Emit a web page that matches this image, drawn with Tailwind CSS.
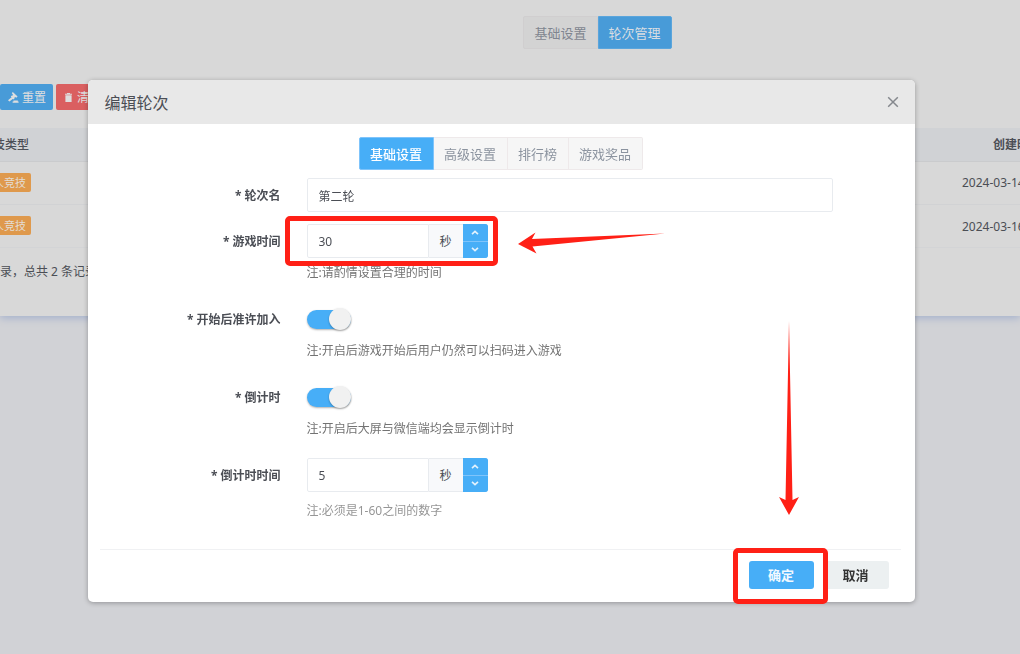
<!DOCTYPE html>
<html lang="zh-CN">
<head>
<meta charset="utf-8">
<meta name="viewport" content="width=device-width, initial-scale=1">
<title>编辑轮次</title>
<script src="https://cdn.jsdelivr.net/npm/@tailwindcss/browser@4"></script>
</head>
<body class="min-h-screen overflow-hidden bg-[#d1d2d6] font-['Noto_Sans','Noto_Sans_CJK_SC',sans-serif] text-xs text-[#4b4e55]">

<!-- Round list behind the dialog -->
<main class="overflow-hidden pb-4">
  <section class="bg-[#d8d8d8] pt-4 pb-[35px] shadow-[0_2px_8px_#a3b0cc]">
    <nav class="flex justify-center pl-[175px] text-[13px]">
      <button type="button" class="h-[33px] rounded-l-xs border border-[#d0cecf] bg-[#d3d3d3] px-[10px] pt-0.5 text-[#7f858f]">基础设置</button>
      <button type="button" class="h-[33px] rounded-r-xs border border-[#5aa5dc] bg-[#489bd8] px-[10px] pt-0.5 text-[#d8dde2]">轮次管理</button>
    </nav>
    <div class="mt-[35px] flex gap-[3px] text-[#dedede]">
      <button type="button" class="flex h-[26px] items-center gap-[3px] rounded-xs bg-[#489bd8] pr-[7px] pl-2">
        <svg class="size-[11px]" viewBox="0 0 11 11" fill="currentColor" aria-hidden="true"><path d="M4.800 0 9.600 4.600 8.300 5.700 7.200 5.100 6.200 6 6.500 6.800 5.600 7.400 2.800 4.600 3.300 3.700 4.100 3.800 5 2.900 4.500 2 3.800 1.200ZM3.600 5.300 5 6.700 1.400 9.400 0 8.200ZM5.500 8.400h4.300v1h.8v1.300H4.600V9.400h.9Z"/></svg>
        <span class="pt-px">重置</span></button>
      <button type="button" class="flex h-[26px] items-center gap-[5px] rounded-xs bg-[#da5f60] px-[9px]">
        <svg class="h-[9px] w-[7px]" viewBox="0 0 7 9" fill="currentColor" aria-hidden="true"><path d="M2 0h3v.7h2v1H0v-1h2ZM.4 2.2h6.2V9H.4Z"/></svg>
        <span class="pt-px">清空</span></button>
    </div>
    <div class="mt-[18px] -mr-[72px] -ml-10">
      <table class="w-full table-fixed border-collapse text-center whitespace-nowrap">
        <colgroup><col class="w-[90px]"><col><col class="w-[150px]"></colgroup>
        <thead>
          <tr class="h-[33px] border-b border-[#cacbcd] bg-[#d0d2d5]"><th class="pt-0.5 font-medium">竞技类型</th><th></th><th class="pt-0.5 font-bold">创建时间</th></tr>
        </thead>
        <tbody>
          <tr class="h-[43px] border-b border-[#d1d2d4]"><td class="pr-0.5"><span class="inline-block rounded-xs bg-[#df994c] px-[5px] text-[11px] leading-[19px] text-[#e3ddd5]">多人竞技</span></td><td></td><td class="pl-5 text-left">2024-03-14 10:20</td></tr>
          <tr class="h-[43px] border-b border-[#d3d4d6]"><td class="pr-0.5"><span class="inline-block rounded-xs bg-[#df994c] px-[5px] text-[11px] leading-[19px] text-[#e3ddd5]">多人竞技</span></td><td></td><td class="pt-0.5 pl-5 text-left">2024-03-16 10:20</td></tr>
        </tbody>
      </table>
    </div>
    <p class="mt-[15px] leading-[18px]">录，总共 2 条记录</p>
  </section>
</main>

<!-- Edit dialog -->
<div class="fixed inset-0 flex items-start justify-center pt-20 pr-[18px]">
  <section role="dialog" aria-labelledby="dialog-title" class="relative w-full max-w-[827px] rounded-[5px] bg-white shadow-[0_1px_5px_rgba(0,0,0,.3)]">
    <header class="flex h-11 items-center justify-between rounded-t-[5px] bg-[#e8e8e8] pr-4 pl-[17px]">
      <h1 id="dialog-title" class="pt-0.5 text-base">编辑轮次</h1>
      <button type="button" aria-label="关闭">
        <svg class="size-3" viewBox="0 0 12 12" fill="none" stroke="#85888d" stroke-width="1.5" aria-hidden="true"><path d="m1.2 1.2 9.6 9.6M10.8 1.2l-9.6 9.6"/></svg>
      </button>
    </header>

    <nav class="flex justify-center pt-[13px] text-[13px] text-[#8b939f]">
      <button type="button" class="h-[33px] rounded-l-xs border border-[#7fc4fb] bg-[#47aef7] pt-0.5 pr-[11px] pl-[10px] font-medium text-white">基础设置</button>
      <button type="button" class="h-[33px] border-y border-r border-[#eee9ea] bg-[#f6f6f6] pt-0.5 pr-[11px] pl-[10px]">高级设置</button>
      <button type="button" class="h-[33px] border-y border-r border-[#eee9ea] bg-[#f6f6f6] pt-0.5 pr-[11px] pl-[10px]">排行榜</button>
      <button type="button" class="h-[33px] rounded-r-xs border-y border-r border-[#eee9ea] bg-[#f6f6f6] pt-0.5 pr-[11px] pl-[10px]">游戏奖品</button>
    </nav>

    <form class="mt-2 text-[#4b4e55]">
      <div class="grid grid-cols-[193px_1fr] items-center gap-x-[26px] pr-[82px]">
        <label for="round-name" class="pt-px text-right font-bold">* 轮次名</label>
        <input id="round-name" type="text" value="第二轮" class="h-[34px] w-full rounded-xs border border-[#e8ebef] px-[11px] pt-0.5 outline-none">
      </div>

      <div class="mt-3 grid grid-cols-[193px_1fr] items-center gap-x-[26px]">
        <label for="game-time" class="pt-px text-right font-bold">* 游戏时间</label>
        <div class="relative flex h-[34px] w-[181px]">
          <input id="game-time" type="text" inputmode="numeric" value="30" class="min-w-0 flex-1 rounded-l-xs border border-[#e8ebef] px-[11px] pt-0.5 outline-none">
          <span class="flex w-[34px] items-center justify-center border-y border-[#e8ebef] bg-[#f8f9fb] pt-0.5">秒</span>
          <span class="flex w-[25px] flex-col gap-px overflow-hidden rounded-r-[3px] bg-[#7fc4fb]">
            <button type="button" aria-label="增加游戏时间" class="flex flex-1 items-center justify-center bg-[#47aef7]"><svg class="h-[5px] w-2" viewBox="0 0 8 5" fill="none" stroke="#e3f2fd" stroke-width="1.6" aria-hidden="true"><path d="M1 4.2 4 1.3l3 2.9"/></svg></button>
            <button type="button" aria-label="减少游戏时间" class="flex flex-1 items-center justify-center bg-[#47aef7]"><svg class="h-[5px] w-2" viewBox="0 0 8 5" fill="none" stroke="#e3f2fd" stroke-width="1.6" aria-hidden="true"><path d="m1 .8 3 2.9L7 .8"/></svg></button>
          </span>
          <span class="pointer-events-none absolute -top-2 -right-[10px] -bottom-2 -left-[22px] rounded-[5px] border-5 border-[#ff2016]"></span>
          <svg class="pointer-events-none absolute top-2 left-[211px] h-[22px] w-[147px]" viewBox="0 0 147 22" fill="#ff2016" aria-hidden="true"><path d="M0 12 17.500 0.500 14 7 147 1.500 14.500 14.500 18.500 21.500Z"/></svg>
        </div>
        <p class="col-start-2 mt-[6px] leading-[18px] text-[#737373]">注:请酌情设置合理的时间</p>
      </div>

      <div class="mt-[26px] grid grid-cols-[193px_1fr] items-center gap-x-[26px]">
        <label for="late-join" class="pt-px text-right leading-[21px] font-bold">* 开始后准许加入</label>
        <input id="late-join" type="checkbox" role="switch" checked class="flex h-[19px] w-11 appearance-none items-center rounded-full bg-[#e4e4e4] shadow-[0_1px_2px_rgba(0,0,0,.3)] before:size-[22px] before:shrink-0 before:rounded-full before:bg-[#f1f1f1] before:shadow-[0_1px_2px_rgba(0,0,0,.3)] checked:justify-end checked:bg-[#47aef7]">
        <p class="col-start-2 mt-[12px] leading-[18px] text-[#737373]">注:开启后游戏开始后用户仍然可以扫码进入游戏</p>
      </div>

      <div class="mt-[26px] grid grid-cols-[193px_1fr] items-center gap-x-[26px]">
        <label for="countdown" class="pt-px text-right leading-[21px] font-bold">* 倒计时</label>
        <input id="countdown" type="checkbox" role="switch" checked class="flex h-[19px] w-11 appearance-none items-center rounded-full bg-[#e4e4e4] shadow-[0_1px_2px_rgba(0,0,0,.3)] before:size-[22px] before:shrink-0 before:rounded-full before:bg-[#f1f1f1] before:shadow-[0_1px_2px_rgba(0,0,0,.3)] checked:justify-end checked:bg-[#47aef7]">
        <p class="col-start-2 mt-[12px] leading-[18px] text-[#737373]">注:开启后大屏与微信端均会显示倒计时</p>
      </div>

      <div class="mt-5 grid grid-cols-[193px_1fr] items-center gap-x-[26px]">
        <label for="countdown-time" class="pt-px text-right font-bold">* 倒计时时间</label>
        <div class="flex h-[34px] w-[181px]">
          <input id="countdown-time" type="text" inputmode="numeric" value="5" class="min-w-0 flex-1 rounded-l-xs border border-[#e8ebef] px-[11px] pt-0.5 outline-none">
          <span class="flex w-[34px] items-center justify-center border-y border-[#e8ebef] bg-[#f8f9fb] pt-0.5">秒</span>
          <span class="flex w-[25px] flex-col gap-px overflow-hidden rounded-r-[3px] bg-[#7fc4fb]">
            <button type="button" aria-label="增加倒计时时间" class="flex flex-1 items-center justify-center bg-[#47aef7]"><svg class="h-[5px] w-2" viewBox="0 0 8 5" fill="none" stroke="#e3f2fd" stroke-width="1.6" aria-hidden="true"><path d="M1 4.2 4 1.3l3 2.9"/></svg></button>
            <button type="button" aria-label="减少倒计时时间" class="flex flex-1 items-center justify-center bg-[#47aef7]"><svg class="h-[5px] w-2" viewBox="0 0 8 5" fill="none" stroke="#e3f2fd" stroke-width="1.6" aria-hidden="true"><path d="m1 .8 3 2.9L7 .8"/></svg></button>
          </span>
        </div>
        <p class="col-start-2 mt-[10px] leading-[18px] text-[#969696]">注:必须是1-60之间的数字</p>
      </div>
    </form>

    <footer class="mt-[29px] mr-[14px] ml-3 flex justify-end gap-[9px] border-t border-[#f0f1f3] pt-[11px] pr-3 pb-[13px] text-[13px] font-bold">
      <div class="relative">
        <button type="button" class="h-7 w-[65px] rounded-[3px] bg-[#47aef7] pt-0.5 text-[#f2f9ff]">确定</button>
        <span class="pointer-events-none absolute -top-[13px] -right-[14px] -bottom-[15px] -left-4 z-10 rounded-[5px] border-5 border-[#ff2016]"></span>
        <svg class="pointer-events-none absolute bottom-[74px] left-[30px] h-[194px] w-5" viewBox="0 0 20 194" fill="#ff2016" aria-hidden="true"><path d="M10 0 13.500 179 20 176 10 194 0 176 6.500 179Z"/></svg>
      </div>
      <button type="button" class="h-7 w-[66px] rounded-[3px] bg-[#ecf0f1] pt-0.5 text-[#333]">取消</button>
    </footer>
  </section>
</div>
</body>
</html>
